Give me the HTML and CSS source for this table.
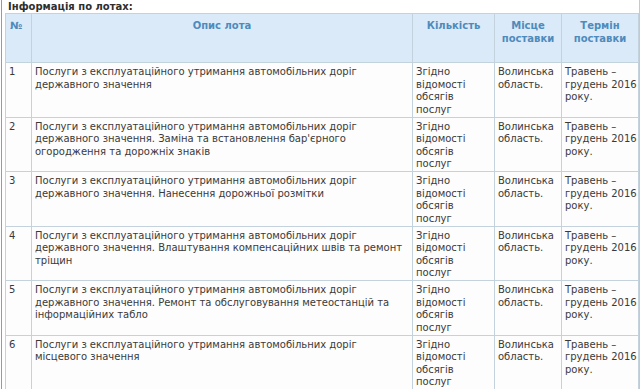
FILE: index.html
```html
<!DOCTYPE html>
<html lang="uk">
<head>
<meta charset="utf-8">
<link rel="stylesheet" href="styles.css">
</head>
<body>
<div class="page">
  <div class="title">Інформація по лотах:</div>
  <table class="lots">
    <colgroup>
      <col class="c-num">
      <col class="c-desc">
      <col class="c-qty">
      <col class="c-place">
      <col class="c-term">
    </colgroup>
    <thead>
      <tr>
        <th>№</th>
        <th>Опис лота</th>
        <th>Кількість</th>
        <th>Місце поставки</th>
        <th>Термін поставки</th>
      </tr>
    </thead>
    <tbody>
      <tr>
        <td>1</td>
        <td>Послуги з експлуатаційного утримання автомобільних доріг державного значення</td>
        <td>Згідно відомості обсягів послуг</td>
        <td>Волинська область.</td>
        <td>Травень – грудень 2016 року.</td>
      </tr>
      <tr>
        <td>2</td>
        <td>Послуги з експлуатаційного утримання автомобільних доріг державного значення. Заміна та встановлення бар'єрного огородження та дорожніх знаків</td>
        <td>Згідно відомості обсягів послуг</td>
        <td>Волинська область.</td>
        <td>Травень – грудень 2016 року.</td>
      </tr>
      <tr>
        <td>3</td>
        <td>Послуги з експлуатаційного утримання автомобільних доріг державного значення. Нанесення дорожньої розмітки</td>
        <td>Згідно відомості обсягів послуг</td>
        <td>Волинська область.</td>
        <td>Травень – грудень 2016 року.</td>
      </tr>
      <tr>
        <td>4</td>
        <td>Послуги з експлуатаційного утримання автомобільних доріг державного значення. Влаштування компенсаційних швів та ремонт тріщин</td>
        <td>Згідно відомості обсягів послуг</td>
        <td>Волинська область.</td>
        <td>Травень – грудень 2016 року.</td>
      </tr>
      <tr>
        <td>5</td>
        <td>Послуги з експлуатаційного утримання автомобільних доріг державного значення. Ремонт та обслуговування метеостанцій та інформаційних табло</td>
        <td>Згідно відомості обсягів послуг</td>
        <td>Волинська область.</td>
        <td>Травень – грудень 2016 року.</td>
      </tr>
      <tr>
        <td>6</td>
        <td>Послуги з експлуатаційного утримання автомобільних доріг місцевого значення</td>
        <td>Згідно відомості обсягів послуг</td>
        <td>Волинська область.</td>
        <td>Травень – грудень 2016 року.</td>
      </tr>
    </tbody>
  </table>
</div>
</body>
</html>
```
FILE: styles.css
```css
html, body {
  margin: 0;
  padding: 0;
  background: #ffffff;
}
body {
  font-family: "DejaVu Sans", Verdana, sans-serif;
  font-size: 10px;
  line-height: 13px;
  color: #3a3a3a;
}
.page {
  margin-left: 1px;
  border-left: 1px solid #9a9a9a;
  border-right: 1px solid #c8c8c8;
  padding: 0 1px 0 3px;
  min-height: 389px;
}
.title {
  font-weight: bold;
  padding: 0 0 0 3px;
  height: 13px;
  line-height: 13px;
  color: #2e2e2e;
}
.lots {
  border-collapse: collapse;
  table-layout: fixed;
  width: 633px;
}
.c-num { width: 26px; }
.c-desc { width: 381px; }
.c-qty { width: 82px; }
.c-place { width: 67px; }
.c-term { width: 77px; }
.lots th,
.lots td {
  border: 1px solid #c4d2de;
  vertical-align: top;
  text-align: left;
}
.lots th {
  background: #dbeaf8;
  color: #4d8bbd;
  font-weight: bold;
  text-align: center;
  height: 41px;
  padding: 5px 2px 2px 2px;
}
.lots th:first-child {
  text-align: left;
  padding-left: 4px;
}
.lots td {
  background: #fdfdfd;
  line-height: 12.6px;
  height: 50.5px;
  padding: 3px 4px 0 3px;
}
.lots td:last-child {
  padding-right: 0;
}
```
